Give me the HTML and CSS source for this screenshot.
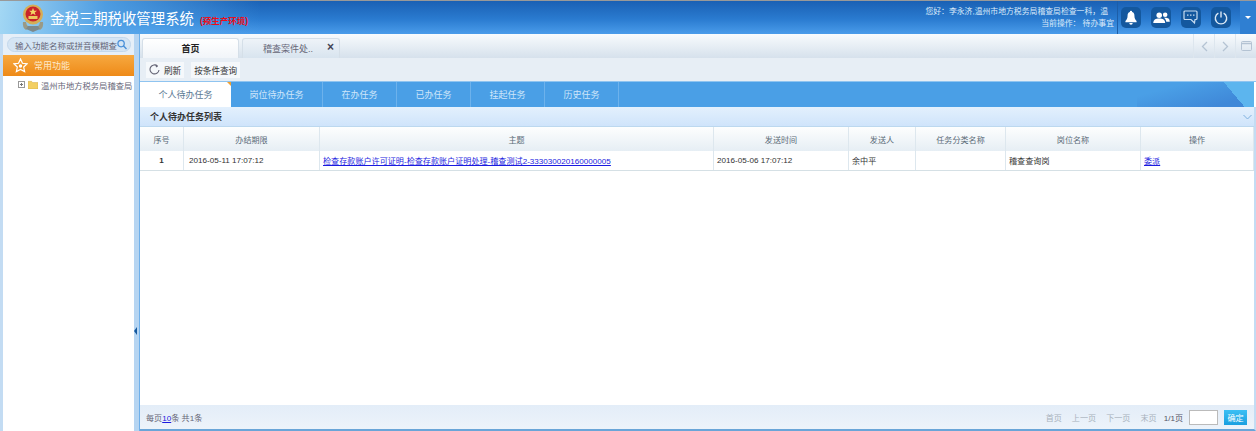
FILE: index.html
```html
<!DOCTYPE html>
<html lang="zh-CN">
  <head>
    <meta charset="UTF-8" />
    <title>金税三期税收管理系统</title>
    <link rel="stylesheet" href="styles.css">
  </head>
  <body>
    <header class="top">
      <svg class="emblem" width="26" height="30" viewBox="0 0 26 30">
        <path d="M3 19 Q2 24 6 27 L9 24 Q6 22 6 19z M23 19 Q24 24 20 27 L17 24 Q20 22 20 19z" fill="#9a9a86" />
        <path d="M6 26 L13 29 20 26 18 23 H8 Z" fill="#7d8a8c" />
        <circle cx="13" cy="11.500" r="10" fill="#d6ad55" />
        <circle cx="13" cy="11" r="7.500" fill="#c8242a" />
        <path d="M8.500 13h9v3h-9z" fill="#ecc95e" />
        <path d="M13 5l1.100 2.700h2.900l-2.300 1.700.9 2.800-2.600-1.700-2.600 1.700.9-2.800L9 7.700h2.900z" fill="#f3d765" />
      </svg>
      <div class="brand">金税三期税收管理系统</div>
      <div class="env">(预生产环境)</div>
      <div class="user">
        <div class="user-name">您好：李永济,温州市地方税务局稽查局检查一科，温</div>
        <div>当前操作： 待办事宜</div>
      </div>
      <div class="top-btns">
        <span class="top-btn">
          <svg width="12" height="15" viewBox="0 0 14 16"><path d="M7 0a1.300 1.300 0 0 1 1.300 1.500C10.500 2.200 11 4 11 6c0 3 1 4.500 2.500 6v1.500H.5V12C2 10.500 3 9 3 6c0-2 .5-3.800 2.700-4.500A1.300 1.300 0 0 1 7 0zM5 14.500h4a2 2 0 0 1-4 0z" fill="#fff" /></svg>
        </span>
        <span class="top-btn">
          <svg width="17" height="11" viewBox="0 0 18 12"><circle cx="6.500" cy="3.500" r="3" fill="#fff" /><path d="M0 12c0-3.500 2.500-5 6.500-5s6.500 1.500 6.500 5z" fill="#fff" /><circle cx="13" cy="3" r="2.500" fill="#fff" /><path d="M13 6.200c3 0 5 1 5 4.300h-3.800c-.3-1.800-1-3.200-2.600-4.200z" fill="#fff" /></svg>
        </span>
        <span class="top-btn">
          <svg width="16" height="15" viewBox="0 0 16 15"><path d="M2 1h11a1 1 0 0 1 1 1v6.500a1 1 0 0 1-1 1h-1L11.500 13 8 9.500H2a1 1 0 0 1-1-1V2a1 1 0 0 1 1-1z" fill="none" stroke="#c8dcf0" stroke-width="1.200" /><path d="M4 5.200h1.500M7 5.200h1.500M10 5.200h1.500" stroke="#c8dcf0" stroke-width="1.200" /></svg>
        </span>
        <span class="top-btn">
          <svg width="14" height="14" viewBox="0 0 16 16"><path d="M5 2.500a6.500 6.500 0 1 0 6 0" fill="none" stroke="#dbe9f6" stroke-width="1.600" /><path d="M8 .5v7" stroke="#dbe9f6" stroke-width="1.600" /></svg>
        </span>
      </div>
      <div class="top-more"><i></i></div>
    </header>

    <div class="body">
      <aside class="side">
        <div class="search-wrap">
          <div class="search">
            <span>输入功能名称或拼音模糊查</span>
            <svg width="11" height="11" viewBox="0 0 11 11"><circle cx="4.500" cy="4.500" r="3.500" fill="none" stroke="#4a90d8" stroke-width="1.400" /><path d="M7 7l3.500 3.500" stroke="#4a90d8" stroke-width="1.600" /></svg>
          </div>
        </div>
        <div class="common">
          <svg width="15" height="15" viewBox="0 0 16 16"><path d="M8 1l2.100 4.600 5 .6-3.700 3.400 1 4.900L8 12.100l-4.400 2.400 1-4.900L.9 6.200l5-.6z" fill="none" stroke="#fff" stroke-width="1.300" /><circle cx="8" cy="8.500" r="1.800" fill="#fff" /></svg>
          <span>常用功能</span>
        </div>
        <div class="tree">
          <span class="plus"></span>
          <svg class="folder" width="10" height="9" viewBox="0 0 11 10"><path d="M0 1.500h4l1 1.300h6V10H0z" fill="#f3cf62" stroke="#d0a83c" stroke-width=".5" /></svg>
          <span class="tree-label">温州市地方税务局稽查局</span>
        </div>
      </aside>
      <div class="split"><i></i></div>

      <main class="main">
        <div class="pagetabs">
          <div class="ptab active">首页</div>
          <div class="ptab">
            <span>稽查案件处..</span>
            <b>×</b>
          </div>
          <div class="nav">
            <span class="nav-btn">
              <svg width="7" height="11" viewBox="0 0 7 11"><path d="M6 1L1.500 5.500 6 10" fill="none" stroke="#b4c3d3" stroke-width="1.300" /></svg>
            </span>
            <span class="nav-btn">
              <svg width="7" height="11" viewBox="0 0 7 11"><path d="M1 1l4.500 4.500L1 10" fill="none" stroke="#b4c3d3" stroke-width="1.300" /></svg>
            </span>
            <span class="nav-btn">
              <svg width="11" height="10" viewBox="0 0 11 10"><rect x=".5" y=".5" width="10" height="9" rx="1" fill="none" stroke="#b4c3d3" /><path d="M.5 2.500h10" stroke="#b4c3d3" stroke-width="1.500" /></svg>
            </span>
          </div>
        </div>

        <div class="toolbar">
          <button type="button" class="tool">
            <svg width="11" height="11" viewBox="0 0 11 11"><path d="M8.500 2A4.500 4.500 0 1 0 10 6" fill="none" stroke="#667" stroke-width="1.100" /><path d="M6.500 .5L9 2.500 7 3.500z" fill="#667" /></svg>
            刷新
          </button>
          <button type="button" class="tool">按条件查询</button>
        </div>

        <div class="tasktabs">
          <div class="ttab active">个人待办任务</div>
          <div class="ttab wide">岗位待办任务</div>
          <div class="ttab">在办任务</div>
          <div class="ttab">已办任务</div>
          <div class="ttab">挂起任务</div>
          <div class="ttab">历史任务</div>
          <div class="tt-deco"></div>
        </div>

        <div class="panel">
          <div class="panel-title">
            <span>个人待办任务列表</span>
            <svg width="9" height="6" viewBox="0 0 9 6"><path d="M.5 1l4 4 4-4" fill="none" stroke="#7fb0df" stroke-width="1" /></svg>
          </div>
          <div class="grid grid-head">
            <div>序号</div>
            <div>办结期限</div>
            <div>主题</div>
            <div>发送时间</div>
            <div>发送人</div>
            <div>任务分类名称</div>
            <div>岗位名称</div>
            <div>操作</div>
          </div>
          <div class="grid grid-row">
            <div class="num">1</div>
            <div>2016-05-11 17:07:12</div>
            <div><a href="#">检查存款账户许可证明-检查存款账户证明处理-稽查测试2-333030020160000005</a></div>
            <div>2016-05-06 17:07:12</div>
            <div>余中平</div>
            <div></div>
            <div>稽查查询岗</div>
            <div><a href="#">委派</a></div>
          </div>
          <div class="spacer"></div>
          <div class="pager">
            <div class="pager-left">每页<a href="#">10</a>条 共1条</div>
            <span class="off">首页</span>
            <span class="off">上一页</span>
            <span class="off">下一页</span>
            <span class="off">末页</span>
            <span class="total">1/1页</span>
            <input class="jump" type="text" />
            <button type="button" class="ok">确定</button>
          </div>
        </div>
      </main>
    </div>
  </body>
</html>
```

FILE: styles.css
```css
* {
  box-sizing: border-box;
}
html,
body {
  margin: 0;
  height: 100%;
}
body {
  display: flex;
  flex-direction: column;
  height: 431px;
  overflow: hidden;
  font-family: "Liberation Sans", "Noto Sans CJK SC", sans-serif;
  font-size: 9px;
  color: #333;
  background: #c3dcf3;
}
a {
  color: #1a1ae0;
}

/* header */
.top {
  display: flex;
  align-items: center;
  flex: none;
  height: 34px;
  padding-left: 20px;
  border-top: 1px solid #999;
  background: linear-gradient(180deg, #1a60b4 0%, #2a7bd0 55%, #4a9cea 100%);
  position: relative;
}
.top::before {
  content: "";
  position: absolute;
  left: 0;
  top: 0;
  width: 260px;
  height: 100%;
  background: linear-gradient(100deg, #a4d8f4 0%, rgba(90, 170, 235, 0.8) 40%, rgba(40, 120, 205, 0) 100%);
}
.emblem,
.brand,
.env {
  position: relative;
}
.emblem {
  flex: none;
}
.brand {
  margin-left: 4px;
  font-size: 14.400px;
  color: #fff;
  white-space: nowrap;
}
.env {
  margin: 5px 0 0 6px;
  font-size: 8.500px;
  font-weight: bold;
  color: #ee0c16;
  white-space: nowrap;
}
.user {
  margin-left: auto;
  padding-right: 3px;
  text-align: right;
  font-size: 7.850px;
  line-height: 12px;
  color: #dcebfa;
  white-space: nowrap;
}
.user-name {
  padding-right: 6px;
}
.top-btns {
  display: flex;
  gap: 10px;
  height: 100%;
  align-items: center;
  margin-right: 9px;
  padding-left: 3px;
  border-left: 1px solid #1d5ea8;
}
.top-btn {
  display: flex;
  align-items: center;
  justify-content: center;
  width: 20px;
  height: 21px;
  border-radius: 5px;
  background: #14589e;
}
.top-more {
  display: flex;
  align-items: center;
  justify-content: center;
  flex: none;
  width: 16px;
  height: 100%;
  background: #2f7fd2;
}
.top-more i {
  border: 3px solid transparent;
  border-top: 3px solid #fff;
  border-bottom: 0;
}

/* layout */
.body {
  display: flex;
  flex: 1;
  min-height: 0;
}
.side {
  flex: none;
  width: 134px;
  border-left: 3px solid #c3dcf3;
  background: #fff;
}
.search-wrap {
  height: 21px;
  padding: 3px 0 3px 4px;
  background: #e6eff8;
}
.search {
  display: flex;
  align-items: center;
  justify-content: space-between;
  width: 124px;
  height: 15px;
  padding: 0 3px 0 7px;
  border: 1px solid #c3d8ec;
  border-radius: 8px;
  background: #d5e5f4;
}
.search span {
  font-size: 8.500px;
  color: #667;
  white-space: nowrap;
}
.common {
  display: flex;
  align-items: center;
  height: 21px;
  padding-left: 10px;
  gap: 6px;
  color: #fdeacc;
  background: linear-gradient(180deg, #f7a940, #ee8a18);
}
.tree {
  display: flex;
  align-items: center;
  height: 15px;
  margin-top: 1px;
  padding-left: 15px;
  gap: 3px;
  white-space: nowrap;
}
.plus {
  flex: none;
  width: 7px;
  height: 7px;
  border: 1px solid #999;
  background: linear-gradient(#777, #777) center / 3px 1px no-repeat, linear-gradient(#777, #777) center / 1px 3px no-repeat, #fff;
}
.folder {
  flex: none;
}
.tree-label {
  font-size: 8.300px;
  color: #667;
}
.split {
  display: flex;
  align-items: flex-end;
  flex: none;
  width: 6px;
  padding-bottom: 96px;
  background: #b6d5f2;
  border-right: 1px solid #6fb0ea;
}
.split i {
  border: 4px solid transparent;
  border-left: 0;
  border-right: 3px solid #14589e;
}
.main {
  display: flex;
  flex-direction: column;
  flex: 1;
  min-width: 0;
  background: #fff;
}

/* page tabs */
.pagetabs {
  display: flex;
  align-items: flex-end;
  flex: none;
  height: 24px;
  padding-left: 2px;
  gap: 3px;
  background: linear-gradient(180deg, #f8fbfd, #d6e1ec);
}
.ptab {
  display: flex;
  align-items: center;
  justify-content: center;
  width: 98px;
  height: 20px;
  border: 1px solid #d5dfe8;
  border-bottom: 0;
  border-radius: 3px 3px 0 0;
  background: linear-gradient(180deg, #eef3f8, #d8e4ef);
  color: #667;
  position: relative;
}
.ptab span {
  margin-left: -6px;
}
.ptab b {
  position: absolute;
  right: 5px;
  top: 2px;
  font-size: 12px;
  line-height: 12px;
  color: #445;
}
.ptab.active {
  width: 97px;
  background: linear-gradient(180deg, #fff, #f1f5f9);
  color: #222;
  font-weight: bold;
}
.nav {
  display: flex;
  align-self: stretch;
  margin-left: auto;
}
.nav-btn {
  display: flex;
  align-items: center;
  justify-content: center;
  width: 21px;
  border-left: 1px solid #dde6ee;
}

/* toolbar */
.toolbar {
  display: flex;
  align-items: center;
  flex: none;
  height: 24px;
  padding-left: 6px;
  gap: 7px;
  background: #e7eef5;
  border-bottom: 1px solid #8fc4f0;
}
.tool {
  display: flex;
  align-items: center;
  gap: 4px;
  height: 16px;
  padding: 0 3px;
  border: 0;
  font: inherit;
  font-size: 8.600px;
  color: #333;
  background: #f5f8fb;
}

/* task tabs */
.tasktabs {
  display: flex;
  flex: none;
  height: 25px;
  margin-right: 2px;
  background: #4a9fe6;
}
.ttab {
  display: flex;
  align-items: center;
  justify-content: center;
  width: 74px;
  color: #cfe6fa;
  border-right: 1px solid #6db2ec;
}
.ttab.wide {
  width: 92px;
}
.ttab.active {
  width: 91px;
  color: #5b7a94;
  background: #fff;
  border-right: 0;
  position: relative;
}
.ttab.active::after {
  content: "";
  position: absolute;
  top: 0;
  right: 0;
  border-top: 4px solid #f0a030;
  border-left: 4px solid transparent;
}
.tt-deco {
  flex: 1;
  background:
    linear-gradient(50deg, transparent 78%, #5cb5ee 78%) right / 117px 100% no-repeat,
    linear-gradient(165deg, #4a9fe6 25%, #3f88d8 80%) right / 117px 100% no-repeat;
}

/* list panel */
.panel {
  display: flex;
  flex-direction: column;
  flex: 1;
  min-height: 0;
  border-right: 2px solid #c3dcf3;
  border-bottom: 2px solid #6aa5d8;
}
.panel-title {
  display: flex;
  align-items: center;
  justify-content: space-between;
  flex: none;
  height: 20px;
  padding: 0 2px 0 10px;
  font-weight: bold;
  color: #333;
  background: linear-gradient(180deg, #e3f0fd, #cfe4fb);
  border-bottom: 1px solid #bcd8ef;
}
.grid {
  display: grid;
  grid-template-columns: 44px 136px 394px 135px 67px 90px 135px 1fr;
  flex: none;
  font-size: 8.100px;
}
.grid > div {
  display: flex;
  align-items: center;
  border-right: 1px solid #dde7ee;
  white-space: nowrap;
  overflow: hidden;
}
.grid-head {
  height: 24px;
  color: #5b6b78;
  background: linear-gradient(180deg, #fdfefe, #e6eef4);
}
.grid-head > div {
  justify-content: center;
}
.grid-row {
  height: 20px;
  border-bottom: 1px solid #d5e0e5;
}
.grid-row > div {
  padding-left: 3px;
}
.grid-row > div:nth-child(2) {
  padding-left: 5px;
}
.grid-row > .num {
  justify-content: center;
  padding-left: 0;
  font-weight: bold;
}
.spacer {
  flex: 1;
}
.pager {
  display: flex;
  align-items: center;
  flex: none;
  height: 24px;
  padding: 0 7px 0 6px;
  background: linear-gradient(180deg, #e3edf8, #edf3fa);
  font-size: 8.100px;
  color: #667;
}
.pager-left {
  margin-right: auto;
}
.off {
  margin-right: 10px;
  color: #a8b2bc;
}
.total {
  margin: 0 6px 0 -3px;
  color: #556;
}
.jump {
  width: 29px;
  height: 15px;
  margin-right: 6px;
  padding: 0;
  border: 1px solid #bbb;
  background: #fff;
}
.ok {
  width: 23px;
  height: 15px;
  padding: 0;
  border: 0;
  font: inherit;
  color: #fff;
  background: linear-gradient(180deg, #3cc0f4, #1a9fe0);
}
```
